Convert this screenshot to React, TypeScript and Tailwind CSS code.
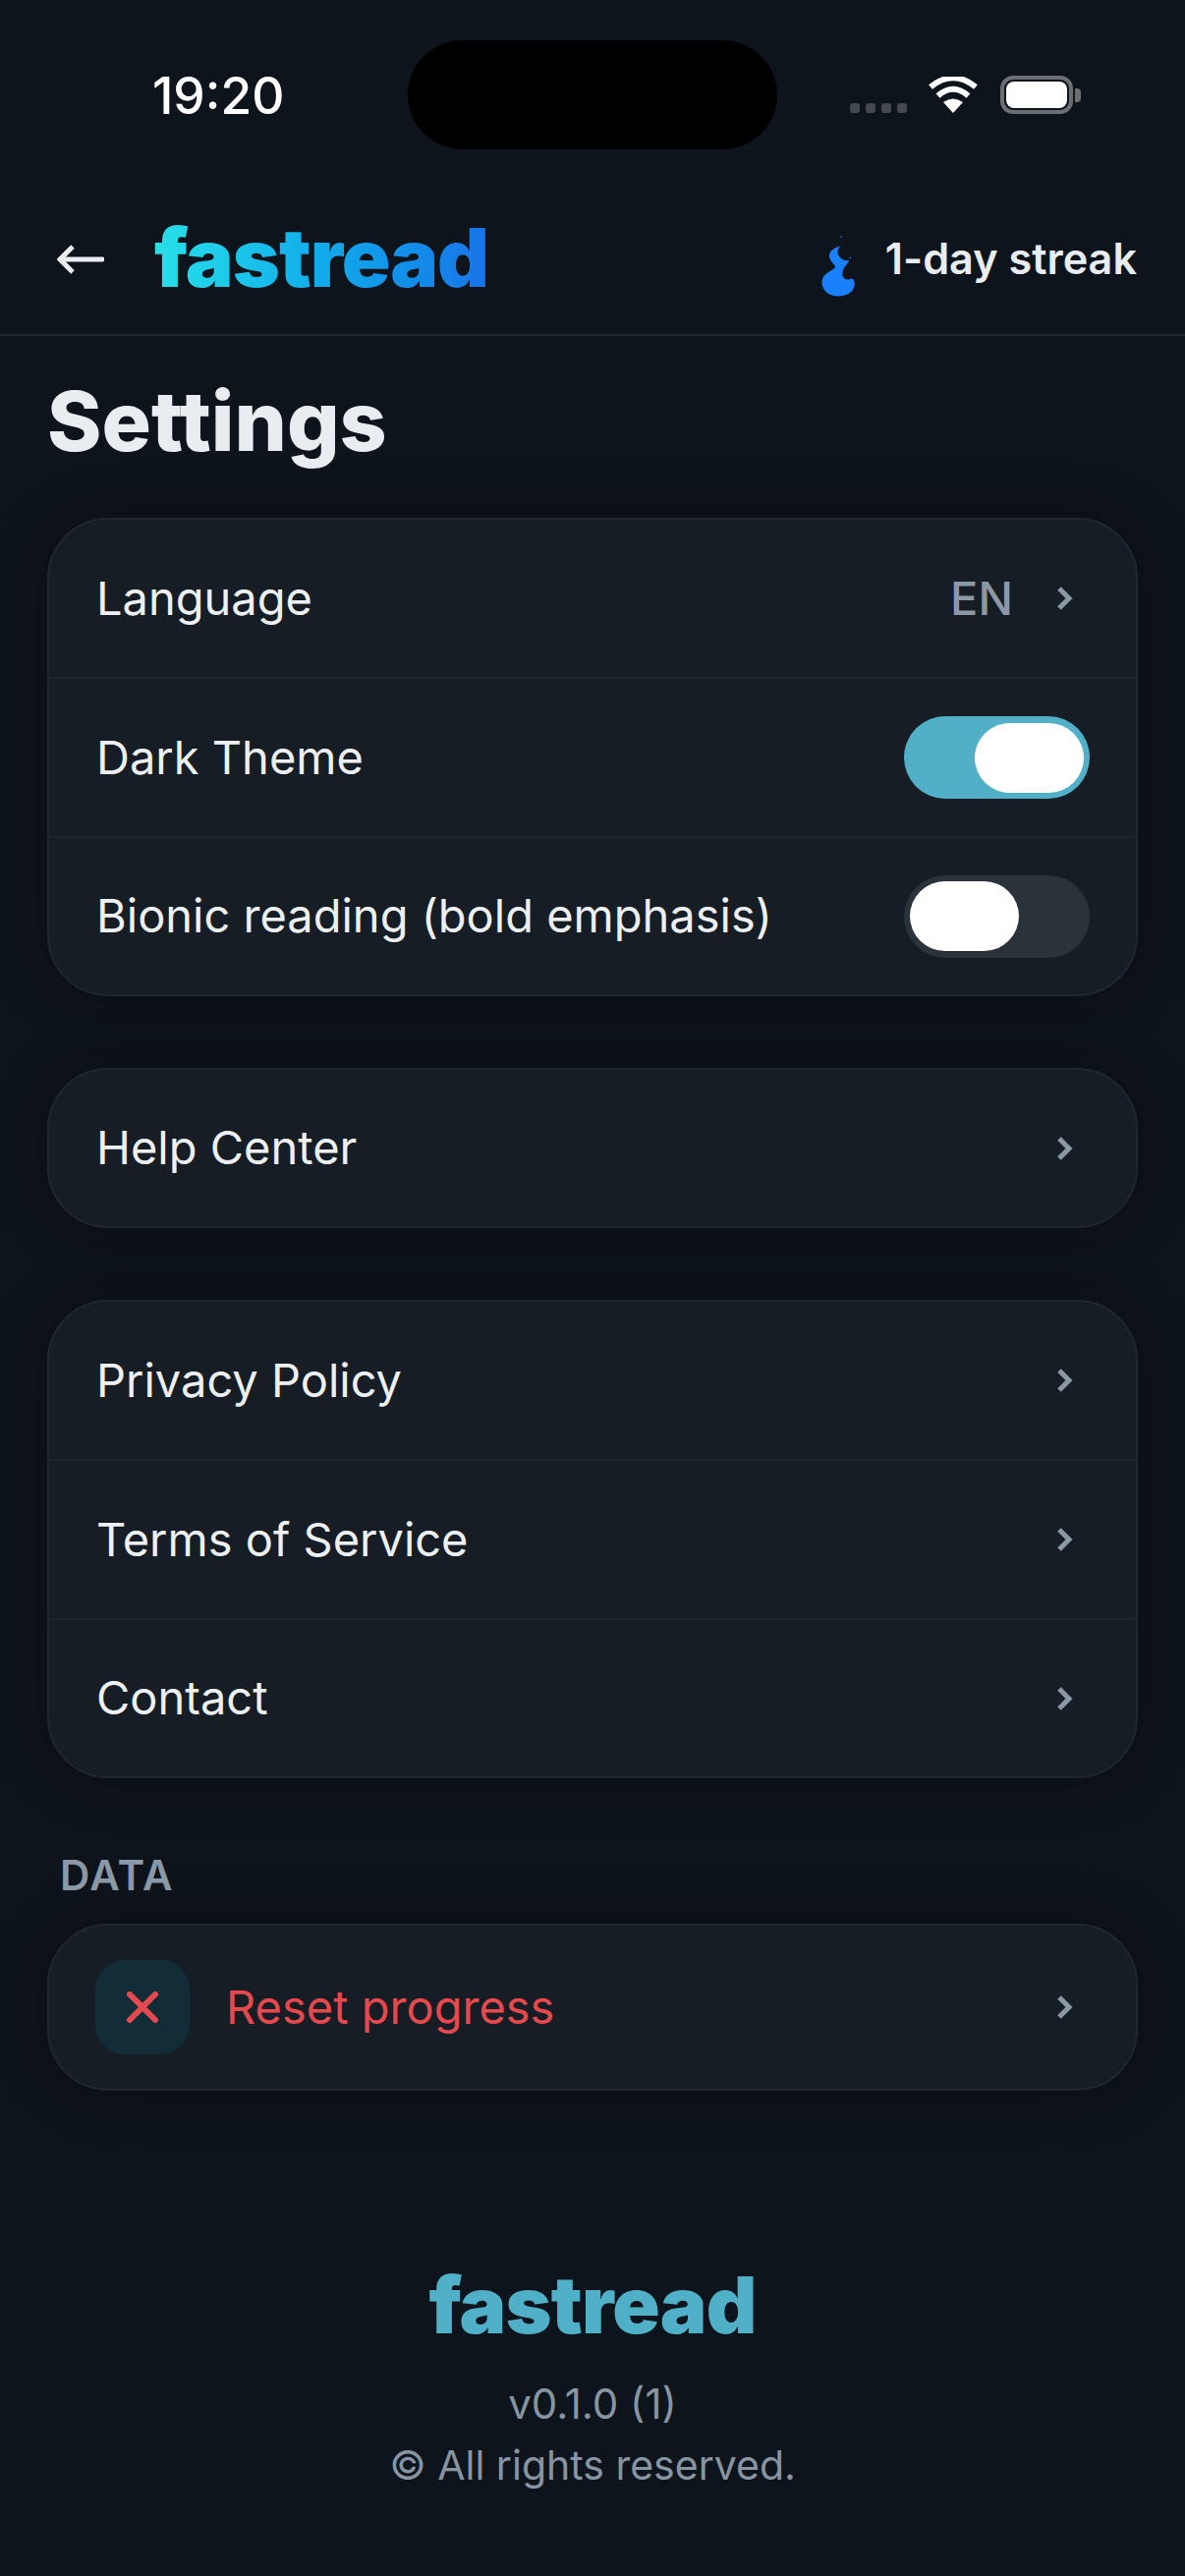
import React from "react";

function Chevron() {
  return (
    <svg width="18" height="26" viewBox="0 0 18 26" className="shrink-0">
      <path d="M3 3 L13 13 L3 23" fill="none" stroke="#8b98a5" strokeWidth="5" />
    </svg>
  );
}

function Toggle({ on }: { on: boolean }) {
  return (
    <div className={`flex h-[84px] w-[189px] items-center rounded-full p-[6px] ${on ? "justify-end bg-[#51b0c8]" : "justify-start bg-[#2a323a]"}`}>
      <div className="h-[71px] w-[111px] rounded-full bg-white" />
    </div>
  );
}

function Row({ label, children, last }: { label: string; children?: React.ReactNode; last?: boolean }) {
  return (
    <div className={`flex items-center justify-between pl-[48px] pr-[47px] ${last ? "h-[159px]" : "h-[162px] border-b-2 border-[#1c242d]"}`}>
      <span className="text-[47px] font-normal text-[#edf0f3]">{label}</span>
      {children}
    </div>
  );
}

function ChevronEnd() {
  return (
    <div className="flex w-[40px] justify-end pr-[16px]">
      <Chevron />
    </div>
  );
}

function Card({ children }: { children: React.ReactNode }) {
  return (
    <div className="overflow-hidden rounded-[62px] border-2 border-[#1f2831] bg-[#161d25] shadow-[0_0_60px_rgba(0,0,0,0.3)]">
      {children}
    </div>
  );
}

export default function App() {
  return (
    <div className="h-[2622px] w-[1206px] overflow-hidden bg-[#0e141b] [font-family:Inter,sans-serif]">
      {/* status bar */}
      <div className="flex h-[152px] items-end">
        <div className="flex h-[111px] w-full items-center">
          <div className="mt-[2px] w-[415px] pl-[155px] text-[51.5px] font-medium text-white">19:20</div>
          <div className="h-[111px] w-[376px] rounded-[56px] bg-black" />
          <div className="flex items-center pl-[74px]">
            <div className="mt-[26px] flex gap-[6px]">
              <div className="h-[10px] w-[10px] rounded-[3px] bg-[#44494e]" />
              <div className="h-[10px] w-[10px] rounded-[3px] bg-[#44494e]" />
              <div className="h-[10px] w-[10px] rounded-[3px] bg-[#44494e]" />
              <div className="h-[10px] w-[10px] rounded-[3px] bg-[#44494e]" />
            </div>
            <svg width="50" height="37" viewBox="0 0 50 37" className="ml-[22px]">
              <path d="M25 37 L15 26 Q25 19 35 26 Z" fill="#fff" />
              <path d="M9.5 19.5 Q25 6 40.5 19.5" fill="none" stroke="#fff" strokeWidth="6" />
              <path d="M2 10.5 Q25 -8 48 10.5" fill="none" stroke="#fff" strokeWidth="6" />
            </svg>
            <div className="ml-[23px] flex items-center">
              <div className="flex h-[39px] w-[74px] items-center justify-center rounded-[13px] border-[4px] border-[#6b6f73]">
                <div className="h-[27px] w-[62px] rounded-[8px] bg-white" />
              </div>
              <div className="ml-[2px] h-[14px] w-[6px] rounded-r-[4px] bg-[#6b6f73]" />
            </div>
          </div>
        </div>
      </div>

      {/* header */}
      <div className="flex h-[190px] items-center justify-between border-b-2 border-[#1f2831] pb-[6px] pl-[58px] pr-[49px] pt-[40px]">
        <div className="flex items-center">
          <svg width="48" height="30" viewBox="0 0 48 30" className="mt-[2px]">
            <path d="M46 15 H4" fill="none" stroke="#e9edf1" strokeWidth="5" strokeLinecap="round" />
            <path d="M16 2 L3 15 L16 28" fill="none" stroke="#e9edf1" strokeWidth="5" />
          </svg>
          <span className="ml-[51px] bg-linear-to-r from-[#29e0e8] to-[#1a73e8] bg-clip-text text-[82px] font-black leading-[96px] tracking-[-1px] text-transparent">
            fastread
          </span>
        </div>
        <div className="flex items-center">
          <svg width="37" height="64" viewBox="130 80 112 192" className="mt-[16px]">
            <path
              fill="#1a80fb"
              d="M196 113 C176 118 158 130 160 146 C162 162 178 170 178 178 C178 186 150 192 140 212 C130 238 150 268 186 268 C222 268 240 250 238 226 C236 216 232 214 228 214 C222 218 212 218 205 212 C198 204 200 192 206 180 C212 172 220 165 221 156 C212 160 205 158 195 150 C184 140 182 124 196 113 Z"
            />
            <circle cx="197" cy="85" r="2.5" fill="#1a80fb" />
            <circle cx="225" cy="150" r="2.5" fill="#1a80fb" />
          </svg>
          <span className="ml-[30px] text-[43.2px] font-semibold text-[#e9edf1]">1-day streak</span>
        </div>
      </div>

      {/* content */}
      <div className="px-[48px]">
        <h1 className="pt-[39px] text-[84px] font-extrabold leading-[96px] text-[#e9edf1]">Settings</h1>

        <div className="mt-[50px]">
          <Card>
            <Row label="Language">
              <div className="flex items-center">
                <span className="mr-[44px] text-[47px] font-medium text-[#8b98a5]">EN</span>
                <div className="pr-[16px]">
                  <Chevron />
                </div>
              </div>
            </Row>
            <Row label="Dark Theme">
              <Toggle on />
            </Row>
            <Row label="Bionic reading (bold emphasis)" last>
              <Toggle on={false} />
            </Row>
          </Card>
        </div>

        <div className="mt-[73px]">
          <Card>
            <Row label="Help Center" last>
              <ChevronEnd />
            </Row>
          </Card>
        </div>

        <div className="mt-[73px]">
          <Card>
            <Row label="Privacy Policy">
              <ChevronEnd />
            </Row>
            <Row label="Terms of Service">
              <ChevronEnd />
            </Row>
            <Row label="Contact" last>
              <ChevronEnd />
            </Row>
          </Card>
        </div>

        <div className="mt-[75px] pl-[13px] text-[42px] font-semibold leading-[48px] tracking-[1.5px] text-[#8b98a5]">DATA</div>

        <div className="mt-[25px]">
          <Card>
            <div className="flex h-[166px] items-center justify-between pl-[47px] pr-[47px]">
              <div className="flex items-center">
                <div className="flex h-[96px] w-[96px] items-center justify-center rounded-[30px] bg-[#132d38]">
                  <svg width="32" height="32" viewBox="0 0 32 32">
                    <path d="M3 3 L29 29 M29 3 L3 29" fill="none" stroke="#e5484d" strokeWidth="6" strokeLinecap="round" />
                  </svg>
                </div>
                <span className="ml-[37px] text-[47px] text-[#e5484d]">Reset progress</span>
              </div>
              <ChevronEnd />
            </div>
          </Card>
        </div>

        <div className="flex flex-col items-center pt-[170px]">
          <div className="text-[80px] font-black leading-[96px] tracking-[-0.8px] text-[#4fb0c8]">fastread</div>
          <div className="mt-[21px] text-[42px] leading-[63px] text-[#8795a3]">v0.1.0 (1)</div>
          <div className="text-[41px] leading-[63px] text-[#8795a3]">© All rights reserved.</div>
        </div>
      </div>
    </div>
  );
}
